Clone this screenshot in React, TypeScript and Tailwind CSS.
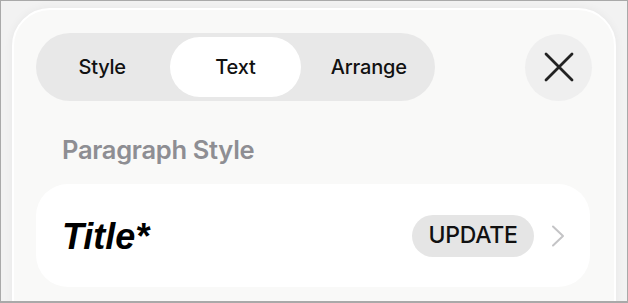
import React from "react";

export default function App() {
  const sf = { fontFamily: "Inter, 'Noto Sans', sans-serif" };
  return (
    <div
      className="w-[628px] h-[303px] bg-[#f2f2f2] border-t border-l border-r border-b-2 border-[#a9a9a9] overflow-hidden pt-[7px] px-[11px] box-border"
      style={sf}
    >
      <div className="h-[320px] rounded-t-[38px] bg-[#f9f9f8] border-2 border-white shadow-[0_0_10px_rgba(0,0,0,0.05)] px-[22px] pt-[23px]">
        <div className="flex items-center justify-between">
          <div className="w-[399px] h-[68px] rounded-full bg-[#e8e8e8] p-1 grid grid-cols-3">
            <div className="flex items-center justify-center pr-[6px] text-[20px] font-medium text-[#111] tracking-[-0.2px]">
              Style
            </div>
            <div className="flex items-center justify-center rounded-full bg-white text-[20px] font-medium text-[#111] tracking-[-0.2px]">
              Text
            </div>
            <div className="flex items-center justify-center pl-[6px] text-[20px] font-medium text-[#111] tracking-[-0.2px]">
              Arrange
            </div>
          </div>
          <div className="w-[67px] h-[67px] rounded-full bg-[#efefef] flex items-center justify-center">
            <svg width="30" height="30" viewBox="0 0 30 30">
              <path d="M2 2 L28 28 M28 2 L2 28" stroke="#222" strokeWidth="2.8" strokeLinecap="round" />
            </svg>
          </div>
        </div>
        <div className="mt-[34px] ml-[26px] text-[25.5px] leading-[30px] font-semibold text-[#8e8e93] tracking-[-0.3px]">
          Paragraph Style
        </div>
        <div className="mt-[19px] h-[103px] w-[554px] rounded-[32px] bg-white flex items-center pl-[26px] pr-[25px]">
          <div
            className="flex-1 pt-[2px] text-[36px] font-bold italic text-black"
            style={{ fontFamily: "'Liberation Sans', Arial, sans-serif" }}
          >
            Title*
          </div>
          <div className="h-[42px] w-[122px] rounded-full bg-[#e5e5e5] flex items-center justify-center text-[23px] font-medium text-[#111] tracking-[-0.3px]">
            UPDATE
          </div>
          <svg className="ml-[17px]" width="14" height="22" viewBox="0 0 14 22">
            <path d="M2 1.5 L12 11 L2 20.5" fill="none" stroke="#c4c4c6" strokeWidth="2" strokeLinecap="round" strokeLinejoin="round" />
          </svg>
        </div>
      </div>
    </div>
  );
}
